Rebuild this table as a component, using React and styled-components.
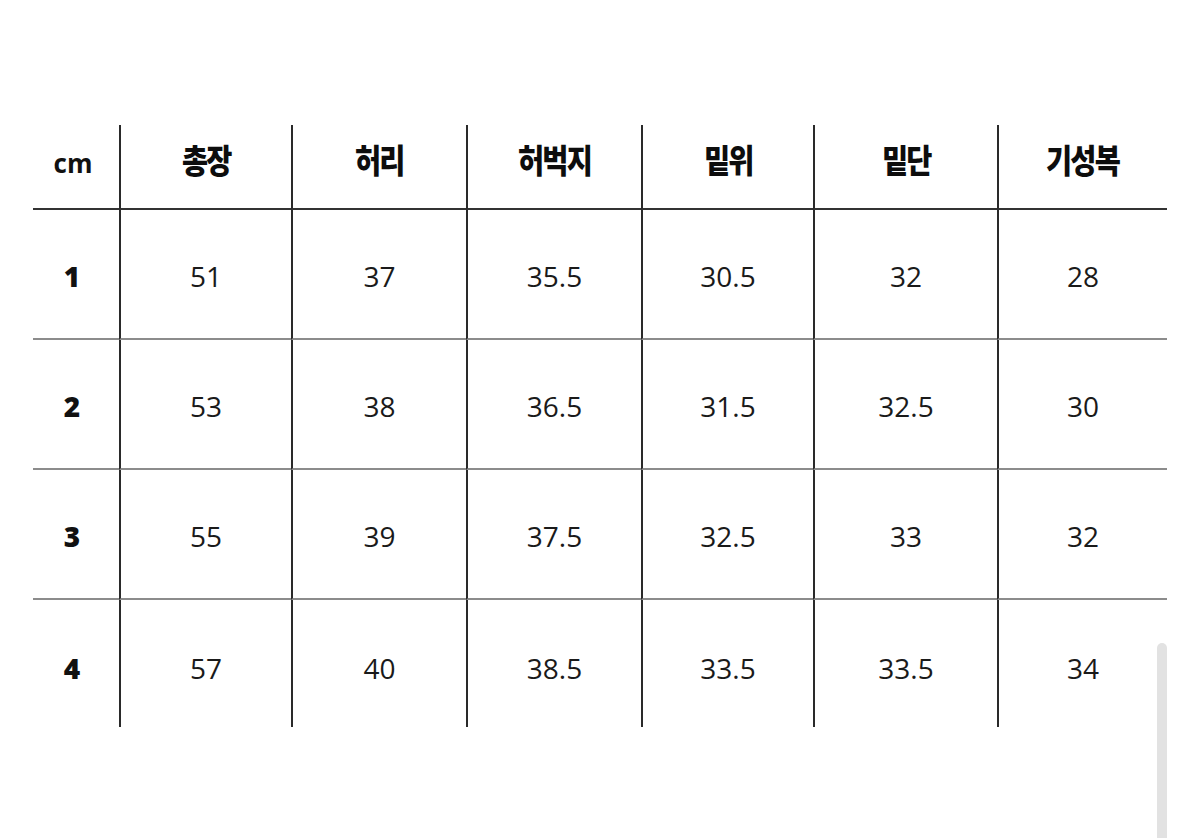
import React from "react";
import styled, { createGlobalStyle } from "styled-components";

const Global = createGlobalStyle`
  html, body { margin: 0; padding: 0; background: #fff; }
  body { width: 1200px; height: 838px; overflow: hidden; font-family: "Open Sans", "Noto Sans CJK KR", sans-serif; color: #111; }
`;

const Page = styled.div`
  position: relative;
  width: 1200px;
  height: 838px;
  padding-top: 125px;
  padding-left: 33px;
  box-sizing: border-box;
`;

const Table = styled.div`
  display: grid;
  grid-template-columns: 86px 172px 175px 175px 172px 184px 170px;
  grid-template-rows: 85px 130px 130px 130px 127px;
  width: 1134px;
`;

const Cell = styled.div`
  display: flex;
  align-items: center;
  justify-content: center;
  box-sizing: border-box;
  border-left: ${(p) => (p.$first ? "none" : "2px solid #2a2a2a")};
  border-bottom: ${(p) =>
    p.$line === "head" ? "2px solid #333" : p.$line === "row" ? "2px solid #8c8c8c" : "none"};
  padding-top: ${(p) => (p.$line === "head" ? "0" : p.$last ? "8px" : "4px")};
  padding-bottom: ${(p) => (p.$line === "head" ? "14px" : "0")};
`;

const HeadText = styled.span`
  font-family: "Noto Sans CJK KR", sans-serif;
  font-weight: 900;
  font-size: 33px;
  letter-spacing: -2px;
  line-height: 1;
  display: inline-block;
  transform: scaleX(0.86);
  color: #0d0d0d;
`;

const Unit = styled.span`
  font-family: "Open Sans", sans-serif;
  font-weight: 700;
  font-size: 26px;
  line-height: 1;
  color: #111;
  margin-right: 6px;
  margin-top: 6px;
`;

const Label = styled.span`
  font-family: "Open Sans", sans-serif;
  font-weight: 800;
  font-size: 28px;
  line-height: 1;
  margin-right: 8px;
`;

const Value = styled.span`
  font-family: "Open Sans", sans-serif;
  font-weight: 400;
  font-size: 28px;
  line-height: 1;
  color: #1a1a1a;
`;

const Scrollbar = styled.div`
  position: absolute;
  left: 1157px;
  top: 643px;
  width: 10px;
  height: 200px;
  border-radius: 5px;
  background: #e2e2e2;
`;

const headers = ["총장", "허리", "허벅지", "밑위", "밑단", "기성복"];
const rows = [
  ["1", "51", "37", "35.5", "30.5", "32", "28"],
  ["2", "53", "38", "36.5", "31.5", "32.5", "30"],
  ["3", "55", "39", "37.5", "32.5", "33", "32"],
  ["4", "57", "40", "38.5", "33.5", "33.5", "34"],
];

export default function App() {
  return (
    <>
      <Global />
      <Page>
        <Table>
          <Cell $first $line="head">
            <Unit>cm</Unit>
          </Cell>
          {headers.map((h) => (
            <Cell key={h} $line="head">
              <HeadText>{h}</HeadText>
            </Cell>
          ))}
          {rows.map((r, ri) => {
            const last = ri === rows.length - 1;
            return r.map((v, ci) => (
              <Cell
                key={ri + "-" + ci}
                $first={ci === 0}
                $line={last ? "none" : "row"}
                $last={last}
              >
                {ci === 0 ? <Label>{v}</Label> : <Value>{v}</Value>}
              </Cell>
            ));
          })}
        </Table>
        <Scrollbar />
      </Page>
    </>
  );
}
